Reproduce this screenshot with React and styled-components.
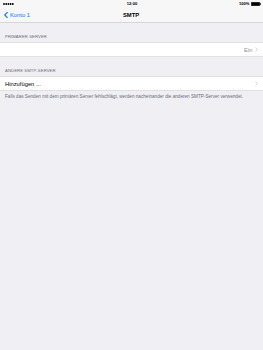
import React from 'react';
import styled, { createGlobalStyle } from 'styled-components';

const GlobalStyle = createGlobalStyle`
  html, body {
    margin: 0;
    padding: 0;
    background: #efeff4;
    font-family: "Liberation Sans", Arial, sans-serif;
    -webkit-font-smoothing: antialiased;
  }
`;

const Screen = styled.div`
  width: 263px;
  height: 350px;
  background: #efeff4;
  overflow: hidden;
`;

const TopBars = styled.div`
  background: #f7f7f8;
  border-bottom: 1px solid #d6d6da;
`;

const StatusBar = styled.div`
  height: 7px;
  display: grid;
  grid-template-columns: 1fr auto 1fr;
  align-items: center;
  padding: 0 2px 0 3px;
  font-size: 4.1px;
  color: #000;
`;

const StatusRight = styled.div`
  display: flex;
  justify-content: flex-end;
  align-items: center;
  gap: 1.5px;
  font-weight: bold;
`;

const Time = styled.div`
  font-weight: bold;
`;

const NavBar = styled.div`
  height: 15px;
  display: grid;
  grid-template-columns: 1fr auto 1fr;
  align-items: center;
  padding: 0 5px 0 4px;
`;

const Back = styled.div`
  display: flex;
  align-items: center;
  gap: 2px;
  color: #007aff;
  font-size: 5.8px;
`;

const Title = styled.div`
  font-size: 5.8px;
  font-weight: bold;
  color: #000;
`;

const SectionHeader = styled.div`
  height: ${p => p.$h}px;
  box-sizing: border-box;
  display: flex;
  align-items: flex-end;
  padding: 0 5px 2.6px;
  font-size: 4.2px;
  color: #6d6d72;
  letter-spacing: 0.1px;
`;

const Cell = styled.div`
  height: 15px;
  box-sizing: border-box;
  background: #fff;
  border-top: 1px solid #e0e0e4;
  border-bottom: 1px solid #e0e0e4;
  display: flex;
  align-items: center;
  justify-content: space-between;
  padding: 0 5px;
  font-size: 5.8px;
  color: #000;
`;

const Detail = styled.div`
  display: flex;
  align-items: center;
  gap: 2.5px;
  color: #8e8e93;
`;

const Footer = styled.div`
  padding: 2.5px 5px 0;
  font-size: 4.65px;
  line-height: 5.6px;
  color: #6d6d72;
`;

const Dots = () => (
  <svg width="11" height="2" viewBox="0 0 11 2">
    {[0, 1, 2, 3, 4].map(i => (
      <circle key={i} cx={1 + i * 2.2} cy="1" r="0.95" fill="#000" />
    ))}
  </svg>
);

const Battery = () => (
  <svg width="10" height="4" viewBox="0 0 10 4">
    <rect x="0.25" y="0.25" width="8.5" height="3.5" rx="0.6" fill="#000" stroke="#000" strokeWidth="0.5" />
    <rect x="9" y="1.2" width="0.8" height="1.6" fill="#000" />
  </svg>
);

const BackChevron = () => (
  <svg width="4" height="6" viewBox="0 0 4 6">
    <path d="M3.3 0.4 L0.8 3 L3.3 5.6" fill="none" stroke="#007aff" strokeWidth="1.1" strokeLinecap="round" strokeLinejoin="round" />
  </svg>
);

const Disclosure = () => (
  <svg width="3" height="5" viewBox="0 0 3 5">
    <path d="M0.5 0.5 L2.4 2.5 L0.5 4.5" fill="none" stroke="#c7c7cc" strokeWidth="0.7" />
  </svg>
);

export default function App() {
  return (
    <Screen>
      <GlobalStyle />
      <TopBars>
        <StatusBar>
          <div><Dots /></div>
          <Time>12:00</Time>
          <StatusRight>
            <span>100%</span>
            <Battery />
          </StatusRight>
        </StatusBar>
        <NavBar>
          <Back>
            <BackChevron />
            <span>Konto 1</span>
          </Back>
          <Title>SMTP</Title>
          <div />
        </NavBar>
      </TopBars>
      <SectionHeader $h={19}>PRIMÄRER SERVER</SectionHeader>
      <Cell>
        <span />
        <Detail>
          <span>Ein</span>
          <Disclosure />
        </Detail>
      </Cell>
      <SectionHeader $h={19}>ANDERE SMTP-SERVER</SectionHeader>
      <Cell>
        <span>Hinzufügen ...</span>
        <Detail>
          <Disclosure />
        </Detail>
      </Cell>
      <Footer>
        Falls das Senden mit dem primären Server fehlschlägt, werden nacheinander die anderen SMTP-Server verwendet.
      </Footer>
    </Screen>
  );
}
